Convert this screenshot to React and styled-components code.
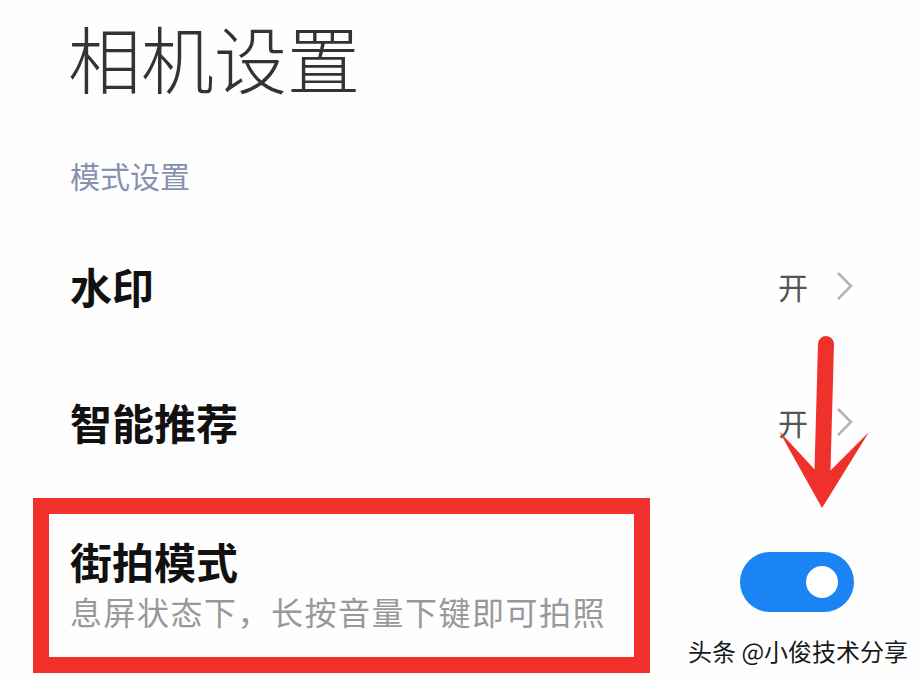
import React from 'react';
import styled, { createGlobalStyle } from 'styled-components';

const GlobalStyle = createGlobalStyle`
  html, body {
    margin: 0;
    padding: 0;
    background: #fefefe;
  }
  body {
    font-family: "Noto Sans CJK SC", "Noto Sans", sans-serif;
  }
`;

const Page = styled.div`
  position: relative;
  width: 923px;
  height: 682px;
  overflow: hidden;
  box-sizing: border-box;
  padding: 20px 69px 0 70px;
  display: flex;
  flex-direction: column;
`;

const Title = styled.h1`
  margin: 0 0 0 -2px;
  font-size: 73px;
  line-height: 73px;
  font-weight: 300;
  color: #333;
`;

const SectionLabel = styled.div`
  margin-top: 67px;
  font-size: 30px;
  line-height: 30px;
  color: #8a90b0;
`;

const Row = styled.div`
  height: 136px;
  display: flex;
  align-items: center;
  justify-content: space-between;
  margin-top: ${p => p.$first ? '28px' : '0'};
`;

const RowTitle = styled.div`
  font-size: 42px;
  line-height: 52px;
  font-weight: 700;
  color: #111;
`;

const RowValue = styled.div`
  display: flex;
  align-items: center;
  gap: 28px;
  font-size: 30px;
  color: #555;
`;

const SwitchRow = styled.div`
  margin-top: 8px;
  display: flex;
  align-items: center;
  justify-content: space-between;
`;

const Highlight = styled.div`
  margin-left: -37px;
  width: 617px;
  height: 175px;
  box-sizing: border-box;
  border: 16px solid #f2302b;
  padding: 21px 0 0 21px;
  display: flex;
  flex-direction: column;
`;

const SubText = styled.div`
  font-size: 32px;
  line-height: 48px;
  color: #999;
  letter-spacing: 1.5px;
`;

const Toggle = styled.div`
  width: 114px;
  height: 60px;
  border-radius: 30px;
  background: #1a84f4;
  position: relative;
  margin-bottom: 7px;
  &::after {
    content: '';
    position: absolute;
    right: 16px;
    top: 14px;
    width: 32px;
    height: 32px;
    border-radius: 50%;
    background: #fff;
  }
`;

const ArrowLayer = styled.svg`
  position: absolute;
  left: 0;
  top: 0;
  pointer-events: none;
`;

const Watermark = styled.div`
  position: absolute;
  left: 688px;
  top: 633px;
  font-size: 24px;
  color: #1a1a1a;
  text-shadow: 1px 1px 0 #fff, -1px -1px 0 #fff, 1px -1px 0 #fff, -1px 1px 0 #fff;
`;

function Chevron() {
  return (
    <svg width="18" height="30" viewBox="0 0 18 30">
      <path d="M2 2 L15 15 L2 28" fill="none" stroke="#b3b3b3" strokeWidth="2.5" />
    </svg>
  );
}

export default function App() {
  return (
    <>
      <GlobalStyle />
      <Page>
        <Title>相机设置</Title>
        <SectionLabel>模式设置</SectionLabel>
        <Row $first>
          <RowTitle>水印</RowTitle>
          <RowValue>开<Chevron /></RowValue>
        </Row>
        <Row>
          <RowTitle>智能推荐</RowTitle>
          <RowValue>开<Chevron /></RowValue>
        </Row>
        <SwitchRow>
          <Highlight>
            <RowTitle>街拍模式</RowTitle>
            <SubText>息屏状态下，长按音量下键即可拍照</SubText>
          </Highlight>
          <Toggle />
        </SwitchRow>
        <ArrowLayer width="923" height="682">
          <line x1="826" y1="344" x2="822" y2="488" stroke="#f0302a" strokeWidth="16" strokeLinecap="round" />
          <polygon points="779,431 817,472 829,472 869,432 822,508" fill="#f0302a" />
        </ArrowLayer>
        <Watermark>头条 @小俊技术分享</Watermark>
      </Page>
    </>
  );
}
